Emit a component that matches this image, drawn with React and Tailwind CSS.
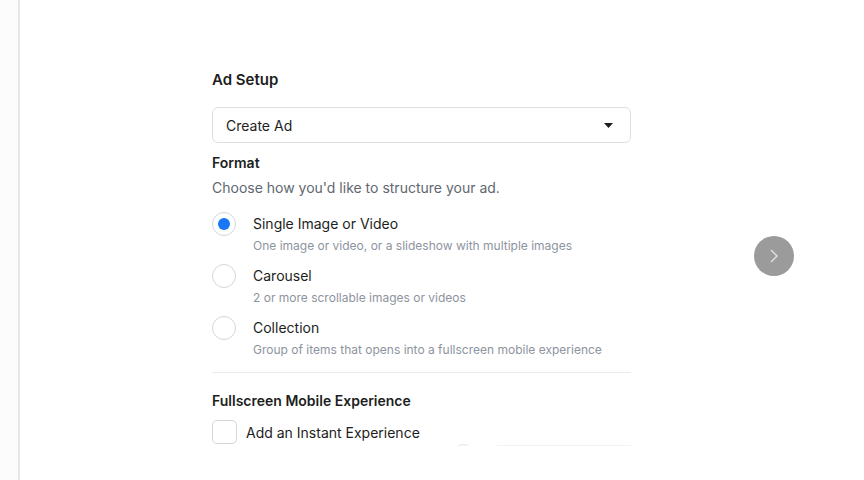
import React from "react";

const font = { fontFamily: 'Inter, "Liberation Sans", Arial, sans-serif' };

function Radio({ checked }) {
  return (
    <div className="w-[24px] h-[24px] rounded-full border border-[#d4d6da] bg-white flex items-center justify-center shrink-0">
      {checked && <div className="w-[12px] h-[12px] rounded-full bg-[#1877f2]" />}
    </div>
  );
}

function Option({ checked, label, desc }) {
  return (
    <div className="flex">
      <div className="w-[41px] shrink-0">
        <div className="-mt-[2px]">
          <Radio checked={checked} />
        </div>
      </div>
      <div>
        <div className="text-[14px] leading-[20px] text-[#1c1e21]">{label}</div>
        <div className="mt-[4px] text-[12px] leading-[16px] text-[#8d949e]">{desc}</div>
      </div>
    </div>
  );
}

export default function App() {
  return (
    <div className="w-[864px] h-[480px] flex bg-white overflow-hidden" style={font}>
      <div className="w-[20px] h-full shrink-0 bg-[#fcfcfc] border-r-2 border-[#e6e6e6]" />
      <div className="relative flex-1 h-full bg-white">
        <div className="ml-[192px] w-[419px] h-[446px] overflow-hidden pt-[70px]">
          <div className="text-[15px] leading-[20px] font-semibold text-[#1c1e21]">Ad Setup</div>
          <div className="mt-[17px] h-[36px] rounded-[6px] border border-[#dddfe2] flex items-center justify-between pl-[13px] pr-[17px]">
            <span className="text-[14px] text-[#1c1e21]">Create Ad</span>
            <svg width="9" height="5" viewBox="0 0 9 5">
              <polygon points="0,0 9,0 4.5,5" fill="#1c1e21" />
            </svg>
          </div>
          <div className="mt-[10px] text-[14px] leading-[20px] font-semibold text-[#1c1e21]">Format</div>
          <div className="mt-[5px] text-[14px] leading-[20px] text-[#606770]">Choose how you'd like to structure your ad.</div>
          <div className="mt-[16px] flex flex-col gap-[12px]">
            <Option checked label="Single Image or Video" desc="One image or video, or a slideshow with multiple images" />
            <Option label="Carousel" desc="2 or more scrollable images or videos" />
            <Option label="Collection" desc="Group of items that opens into a fullscreen mobile experience" />
          </div>
          <div className="mt-[14px] h-px bg-[#e9eaed]" />
          <div className="mt-[18px] text-[14px] leading-[20px] font-semibold text-[#1c1e21]">Fullscreen Mobile Experience</div>
          <div className="mt-[9px] flex items-center">
            <div className="w-[25px] h-[24px] rounded-[5px] border border-[#d4d6da] bg-white shrink-0" />
            <span className="ml-[9px] text-[14px] text-[#1c1e21]">Add an Instant Experience</span>
          </div>
          <div className="flex items-start h-[20px]">
            <div className="ml-[241px] w-[20px] h-[20px] rounded-full border border-[#e3e4e6] shrink-0" />
            <div className="ml-[24px] mt-[1px] flex-1 h-[2px] bg-[#f1f2f3]" />
          </div>
        </div>
        <button className="absolute left-[734px] top-[236px] w-[40px] h-[40px] rounded-full bg-[#9b9b9b] flex items-center justify-center">
          <svg width="10" height="16" viewBox="0 0 10 16">
            <polyline points="2,2 8,8 2,14" fill="none" stroke="#e6e6e6" strokeWidth="1.3" />
          </svg>
        </button>
      </div>
    </div>
  );
}
